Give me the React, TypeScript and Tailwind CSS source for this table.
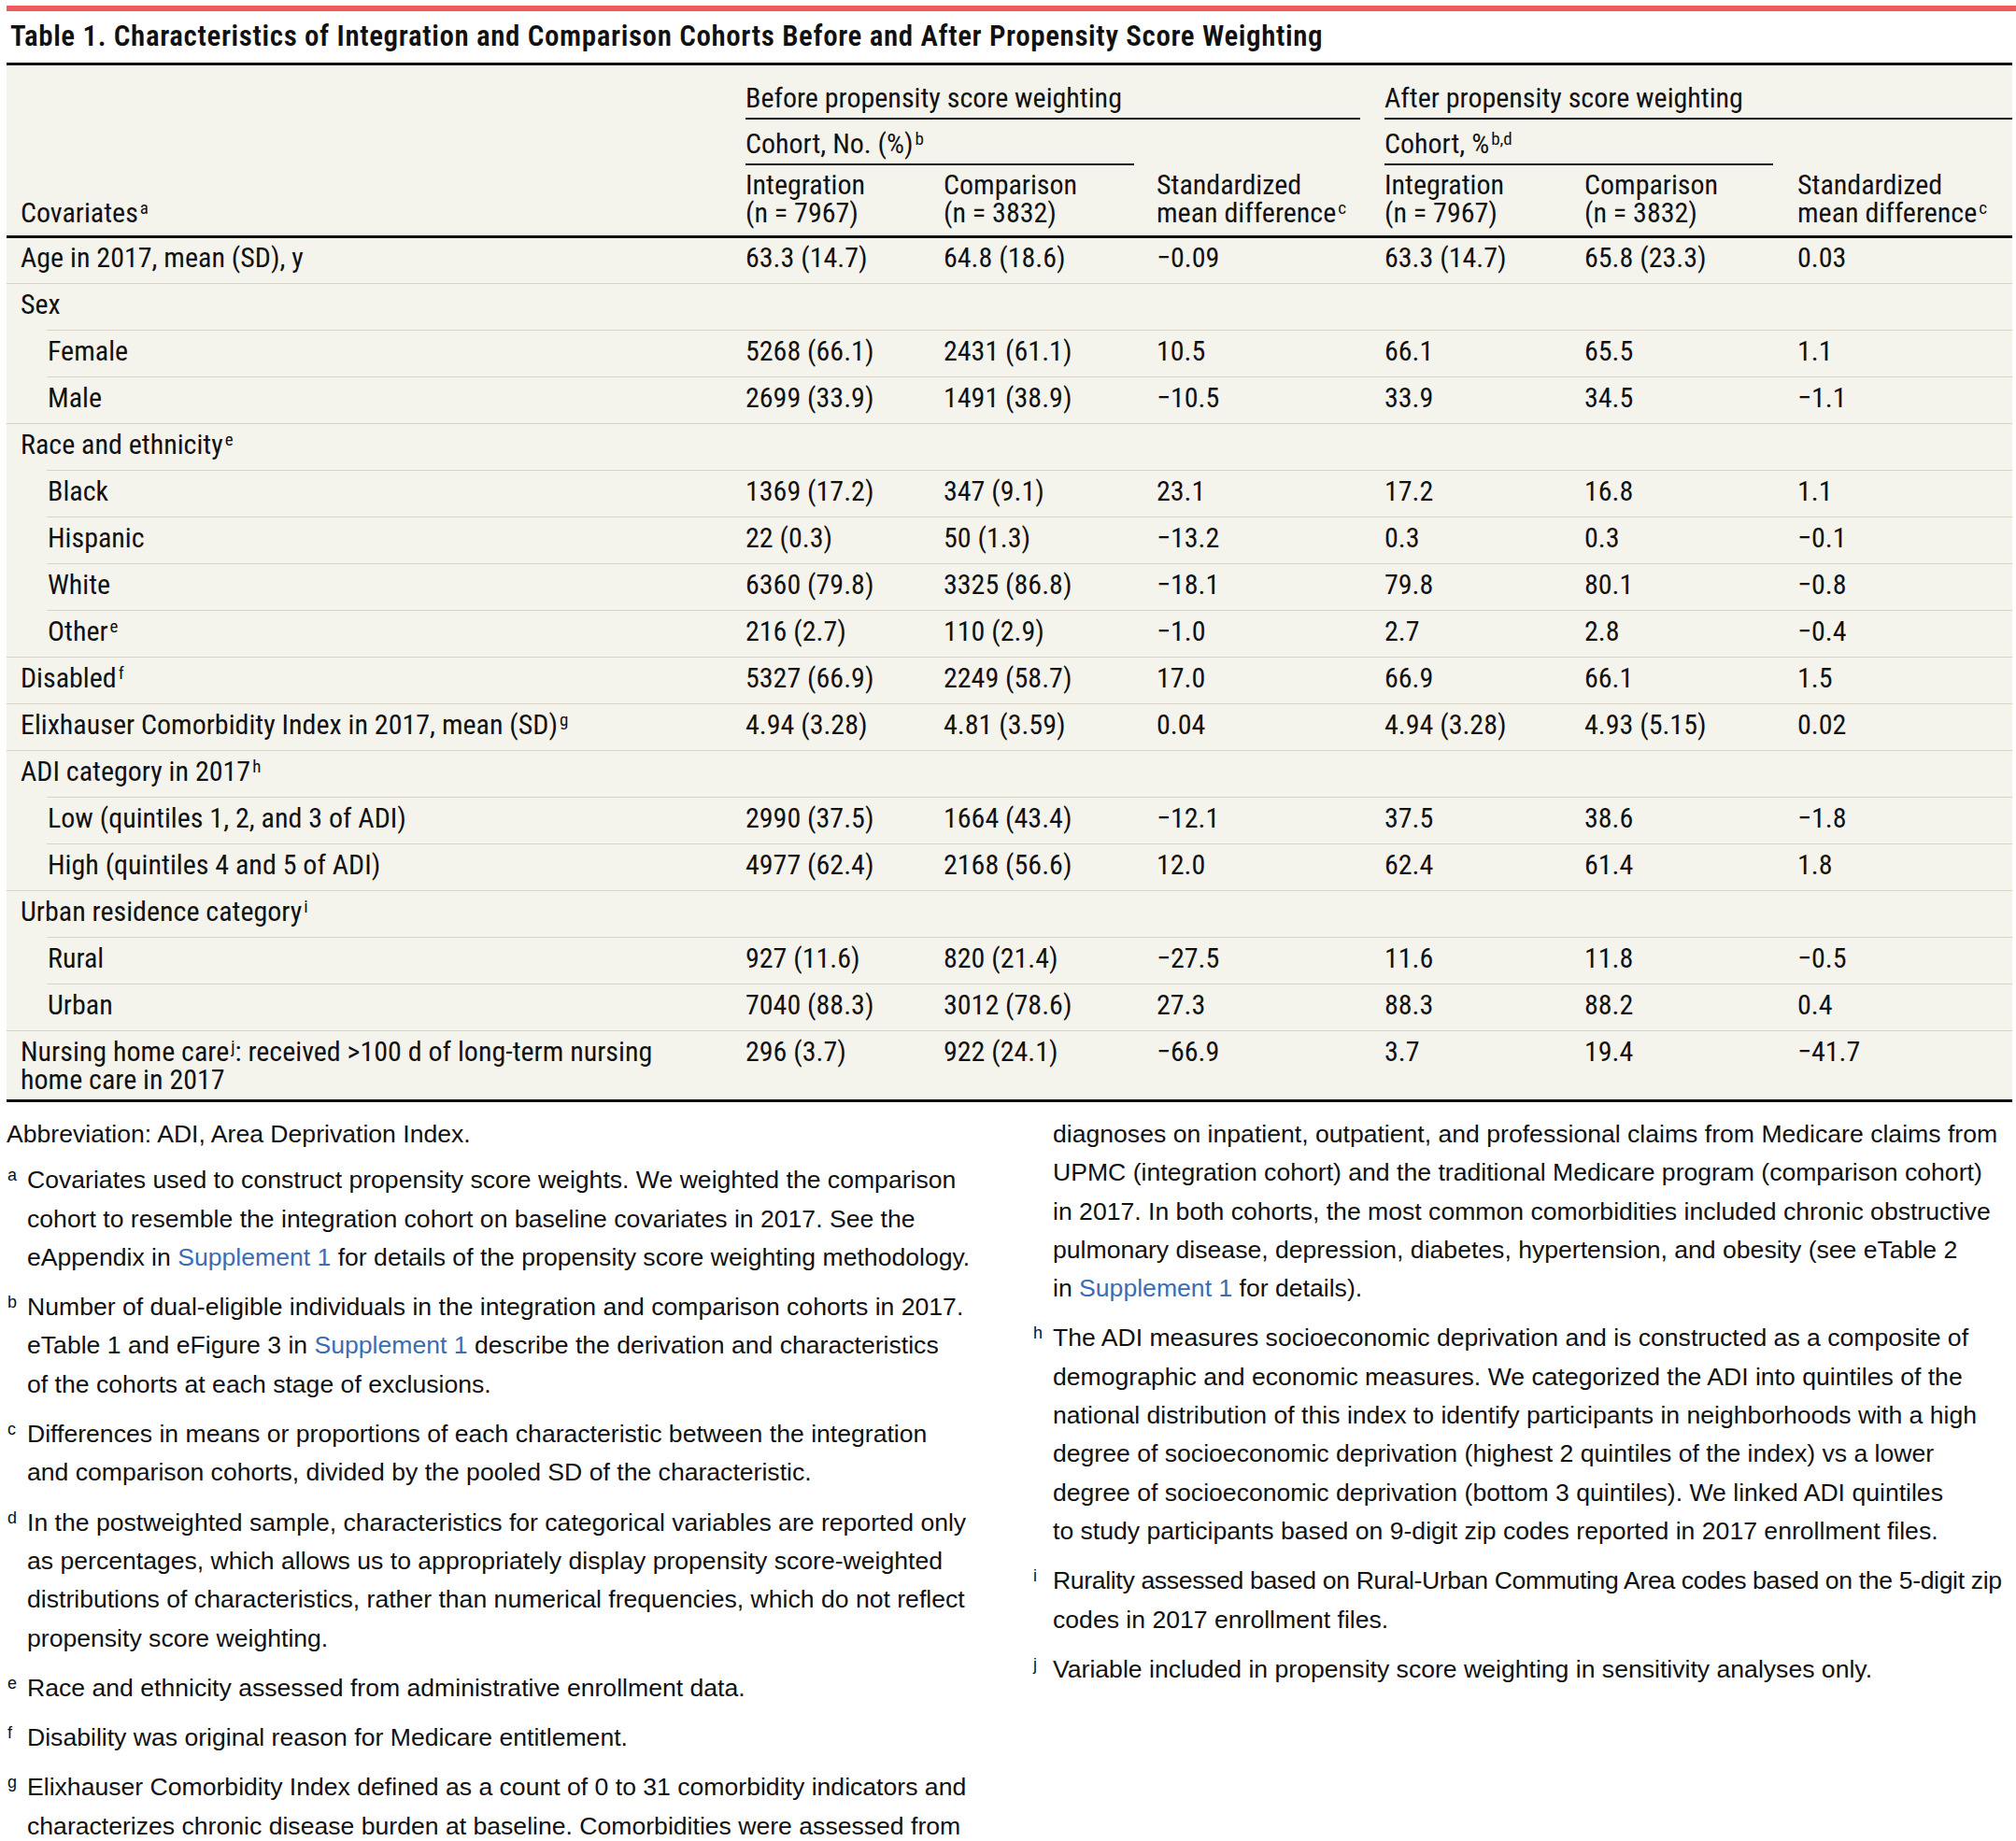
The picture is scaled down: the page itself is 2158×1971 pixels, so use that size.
import React from 'react';

const COLS = 'grid-cols-[783px_212px_228px_244px_214px_228px_238px]';
const COND = "font-['Liberation_Sans_Narrow','Roboto_Condensed','DejaVu_Sans_Condensed',sans-serif]";
const TEXT = "font-['Liberation_Sans',Arial,sans-serif]";

type Row = { label: React.ReactNode; sub?: boolean; vals?: string[] };

const Sup = ({ children }: { children: React.ReactNode }) => (
  <sup className="ml-[2px] text-[19px]">{children}</sup>
);

const rows: Row[] = [
  { label: 'Age in 2017, mean (SD), y', vals: ['63.3 (14.7)', '64.8 (18.6)', '−0.09', '63.3 (14.7)', '65.8 (23.3)', '0.03'] },
  { label: 'Sex' },
  { label: 'Female', sub: true, vals: ['5268 (66.1)', '2431 (61.1)', '10.5', '66.1', '65.5', '1.1'] },
  { label: 'Male', sub: true, vals: ['2699 (33.9)', '1491 (38.9)', '−10.5', '33.9', '34.5', '−1.1'] },
  { label: <>Race and ethnicity<Sup>e</Sup></> },
  { label: 'Black', sub: true, vals: ['1369 (17.2)', '347 (9.1)', '23.1', '17.2', '16.8', '1.1'] },
  { label: 'Hispanic', sub: true, vals: ['22 (0.3)', '50 (1.3)', '−13.2', '0.3', '0.3', '−0.1'] },
  { label: 'White', sub: true, vals: ['6360 (79.8)', '3325 (86.8)', '−18.1', '79.8', '80.1', '−0.8'] },
  { label: <>Other<Sup>e</Sup></>, sub: true, vals: ['216 (2.7)', '110 (2.9)', '−1.0', '2.7', '2.8', '−0.4'] },
  { label: <>Disabled<Sup>f</Sup></>, vals: ['5327 (66.9)', '2249 (58.7)', '17.0', '66.9', '66.1', '1.5'] },
  { label: <>Elixhauser Comorbidity Index in 2017, mean (SD)<Sup>g</Sup></>, vals: ['4.94 (3.28)', '4.81 (3.59)', '0.04', '4.94 (3.28)', '4.93 (5.15)', '0.02'] },
  { label: <>ADI category in 2017<Sup>h</Sup></> },
  { label: 'Low (quintiles 1, 2, and 3 of ADI)', sub: true, vals: ['2990 (37.5)', '1664 (43.4)', '−12.1', '37.5', '38.6', '−1.8'] },
  { label: 'High (quintiles 4 and 5 of ADI)', sub: true, vals: ['4977 (62.4)', '2168 (56.6)', '12.0', '62.4', '61.4', '1.8'] },
  { label: <>Urban residence category<Sup>i</Sup></> },
  { label: 'Rural', sub: true, vals: ['927 (11.6)', '820 (21.4)', '−27.5', '11.6', '11.8', '−0.5'] },
  { label: 'Urban', sub: true, vals: ['7040 (88.3)', '3012 (78.6)', '27.3', '88.3', '88.2', '0.4'] },
  {
    label: (
      <>
        <div>Nursing home care<Sup>j</Sup>: received &gt;100 d of long-term nursing</div>
        <div>home care in 2017</div>
      </>
    ),
    vals: ['296 (3.7)', '922 (24.1)', '−66.9', '3.7', '19.4', '−41.7'],
  },
];

const headings: [React.ReactNode, React.ReactNode][] = [
  ['Integration', '(n = 7967)'],
  ['Comparison', '(n = 3832)'],
  ['Standardized', <>mean difference<Sup>c</Sup></>],
  ['Integration', '(n = 7967)'],
  ['Comparison', '(n = 3832)'],
  ['Standardized', <>mean difference<Sup>c</Sup></>],
];

const BodyRow = ({ row, first, last }: { row: Row; first: boolean; last: boolean }) => (
  <div>
    {!first && <div className={row.sub ? 'ml-[43px] h-px bg-[#d9d3c6]' : 'h-px bg-[#d9d3c6]'} />}
    <div className={`grid ${COLS} leading-[30px] ${first ? 'pt-[6px]' : 'pt-[7px]'} ${last ? 'pb-[6px]' : 'pb-[12px]'}`}>
      <div className={row.sub ? 'pl-[44px]' : 'pl-[15px]'}>{row.label}</div>
      {(row.vals ?? ['', '', '', '', '', '']).map((v, i) => (
        <div key={i} className="pl-2">{v}</div>
      ))}
    </div>
  </div>
);

// footnotes: each entry is a list of forced lines
type Note = { mark?: string; lines: React.ReactNode[]; gap?: string };

const Link = ({ children }: { children: React.ReactNode }) => (
  <span className="text-[#3b6db3]">{children}</span>
);

const leftNotes: Note[] = [
  { lines: ['Abbreviation: ADI, Area Deprivation Index.'] },
  {
    mark: 'a',
    gap: 'mt-[8px]',
    lines: [
      'Covariates used to construct propensity score weights. We weighted the comparison',
      'cohort to resemble the integration cohort on baseline covariates in 2017. See the',
      <>eAppendix in <Link>Supplement 1</Link> for details of the propensity score weighting methodology.</>,
    ],
  },
  {
    mark: 'b',
    lines: [
      'Number of dual-eligible individuals in the integration and comparison cohorts in 2017.',
      <>eTable 1 and eFigure 3 in <Link>Supplement 1</Link> describe the derivation and characteristics</>,
      'of the cohorts at each stage of exclusions.',
    ],
  },
  {
    mark: 'c',
    lines: [
      'Differences in means or proportions of each characteristic between the integration',
      'and comparison cohorts, divided by the pooled SD of the characteristic.',
    ],
  },
  {
    mark: 'd',
    lines: [
      'In the postweighted sample, characteristics for categorical variables are reported only',
      'as percentages, which allows us to appropriately display propensity score-weighted',
      'distributions of characteristics, rather than numerical frequencies, which do not reflect',
      'propensity score weighting.',
    ],
  },
  { mark: 'e', lines: ['Race and ethnicity assessed from administrative enrollment data.'] },
  { mark: 'f', lines: ['Disability was original reason for Medicare entitlement.'] },
  {
    mark: 'g',
    lines: [
      'Elixhauser Comorbidity Index defined as a count of 0 to 31 comorbidity indicators and',
      'characterizes chronic disease burden at baseline. Comorbidities were assessed from',
    ],
  },
];

const rightNotes: Note[] = [
  {
    lines: [
      'diagnoses on inpatient, outpatient, and professional claims from Medicare claims from',
      'UPMC (integration cohort) and the traditional Medicare program (comparison cohort)',
      'in 2017. In both cohorts, the most common comorbidities included chronic obstructive',
      'pulmonary disease, depression, diabetes, hypertension, and obesity (see eTable 2',
      <>in <Link>Supplement 1</Link> for details).</>,
    ],
  },
  {
    mark: 'h',
    lines: [
      'The ADI measures socioeconomic deprivation and is constructed as a composite of',
      'demographic and economic measures. We categorized the ADI into quintiles of the',
      'national distribution of this index to identify participants in neighborhoods with a high',
      'degree of socioeconomic deprivation (highest 2 quintiles of the index) vs a lower',
      'degree of socioeconomic deprivation (bottom 3 quintiles). We linked ADI quintiles',
      'to study participants based on 9-digit zip codes reported in 2017 enrollment files.',
    ],
  },
  {
    mark: 'i',
    lines: [
      <span className="tracking-[-0.35px]">
        Rurality assessed based on Rural-Urban Commuting Area codes based on the 5-digit zip
      </span>,
      'codes in 2017 enrollment files.',
    ],
  },
  { mark: 'j', lines: ['Variable included in propensity score weighting in sensitivity analyses only.'] },
];

const NoteBlock = ({ note, first, indent }: { note: Note; first: boolean; indent: boolean }) => (
  <div className={`flex ${first ? '' : note.gap ?? 'mt-[12px]'}`}>
    {indent && (
      <span className="w-[22px] shrink-0 text-[18px] leading-[30px] pl-[1px]">{note.mark ?? ''}</span>
    )}
    <div className="leading-[41.3px] whitespace-nowrap">
      {note.lines.map((l, i) => (
        <div key={i}>{l}</div>
      ))}
    </div>
  </div>
);

export default function App() {
  return (
    <div className="w-[2158px] min-h-[1971px] bg-white text-[#111] overflow-hidden">
      {/* red rule */}
      <div className="mt-[6px] ml-[7px] h-[6px] bg-[#f15a5b]" />

      {/* title */}
      <div className={`${COND} h-[55px] pl-[11px] flex items-center text-[31px] font-semibold tracking-[0.6px]`}>
        Table 1. Characteristics of Integration and Comparison Cohorts Before and After Propensity Score Weighting
      </div>

      {/* table */}
      <div className={`${COND} ml-[7px] w-[2147px] bg-[#f4f3ec] text-[30px] border-t-[3px] border-[#111]`}>
        <div className={`grid ${COLS}`}>
          <div className="row-span-3 flex items-end pl-[15px] pb-[9px] leading-[30px]">
            <span>Covariates<Sup>a</Sup></span>
          </div>
          <div className="col-span-3 pl-2 pr-[18px] pt-[20px]">
            <div className="border-b-2 border-[#111] pb-[6px] leading-[30px]">Before propensity score weighting</div>
          </div>
          <div className="col-span-3 pl-2 pt-[20px]">
            <div className="border-b-2 border-[#111] pb-[6px] leading-[30px]">After propensity score weighting</div>
          </div>
          <div className="col-span-2 pl-2 pr-4 pt-[11px]">
            <div className="border-b-2 border-[#111] pb-[6px] leading-[30px]">
              Cohort, No. (%)<Sup>b</Sup>
            </div>
          </div>
          <div />
          <div className="col-span-2 pl-2 pr-[18px] pt-[11px]">
            <div className="border-b-2 border-[#111] pb-[6px] leading-[30px]">
              Cohort, %<Sup>b,d</Sup>
            </div>
          </div>
          <div />
          {headings.map(([a, b], i) => (
            <div key={i} className="pl-2 pt-[6px] pb-[9px] leading-[30px]">
              <div>{a}</div>
              <div>{b}</div>
            </div>
          ))}
        </div>
        <div className="h-[3px] bg-[#111]" />
        {rows.map((r, i) => (
          <BodyRow key={i} row={r} first={i === 0} last={i === rows.length - 1} />
        ))}
        <div className="h-[3px] bg-[#111]" />
      </div>

      {/* footnotes */}
      <div className={`${TEXT} grid grid-cols-[1098px_1fr] ml-[7px] mt-[14px] text-[26.6px]`}>
        <div>
          {leftNotes.map((n, i) => (
            <NoteBlock key={i} note={n} first={i === 0} indent={i !== 0} />
          ))}
        </div>
        <div>
          {rightNotes.map((n, i) => (
            <NoteBlock key={i} note={n} first={i === 0} indent />
          ))}
        </div>
      </div>
    </div>
  );
}
